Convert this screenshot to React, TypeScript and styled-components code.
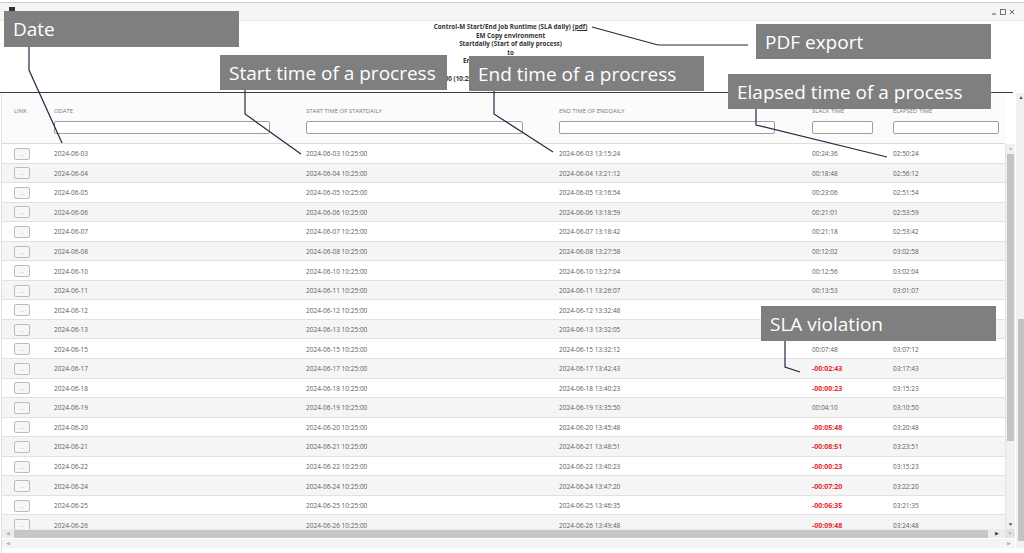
import React from 'react';
import styled, { createGlobalStyle } from 'styled-components';

interface SlaRow {
  odate: string;
  end: string;
  slack: string;
  elapsed: string;
}

const rows: SlaRow[] = [
  { odate: '2024-06-03', end: '13:15:24', slack: '00:24:36', elapsed: '02:50:24' },
  { odate: '2024-06-04', end: '13:21:12', slack: '00:18:48', elapsed: '02:56:12' },
  { odate: '2024-06-05', end: '13:16:54', slack: '00:23:06', elapsed: '02:51:54' },
  { odate: '2024-06-06', end: '13:18:59', slack: '00:21:01', elapsed: '02:53:59' },
  { odate: '2024-06-07', end: '13:18:42', slack: '00:21:18', elapsed: '02:53:42' },
  { odate: '2024-06-08', end: '13:27:58', slack: '00:12:02', elapsed: '03:02:58' },
  { odate: '2024-06-10', end: '13:27:04', slack: '00:12:56', elapsed: '03:02:04' },
  { odate: '2024-06-11', end: '13:26:07', slack: '00:13:53', elapsed: '03:01:07' },
  { odate: '2024-06-12', end: '13:32:48', slack: '00:07:12', elapsed: '03:07:48' },
  { odate: '2024-06-13', end: '13:32:05', slack: '00:07:55', elapsed: '03:07:05' },
  { odate: '2024-06-15', end: '13:32:12', slack: '00:07:48', elapsed: '03:07:12' },
  { odate: '2024-06-17', end: '13:42:43', slack: '-00:02:43', elapsed: '03:17:43' },
  { odate: '2024-06-18', end: '13:40:23', slack: '-00:00:23', elapsed: '03:15:23' },
  { odate: '2024-06-19', end: '13:35:50', slack: '00:04:10', elapsed: '03:10:50' },
  { odate: '2024-06-20', end: '13:45:48', slack: '-00:05:48', elapsed: '03:20:48' },
  { odate: '2024-06-21', end: '13:48:51', slack: '-00:08:51', elapsed: '03:23:51' },
  { odate: '2024-06-22', end: '13:40:23', slack: '-00:00:23', elapsed: '03:15:23' },
  { odate: '2024-06-24', end: '13:47:20', slack: '-00:07:20', elapsed: '03:22:20' },
  { odate: '2024-06-25', end: '13:46:35', slack: '-00:06:35', elapsed: '03:21:35' },
  { odate: '2024-06-26', end: '13:49:48', slack: '-00:09:48', elapsed: '03:24:48' },
];

const GRID_COLUMNS = '40px 252px 253px 253px 81px 1fr';

const GlobalStyle = createGlobalStyle`
  html, body {
    margin: 0;
    padding: 0;
    background: #fff;
  }
  body {
    font-family: 'Open Sans', 'Noto Sans', 'Liberation Sans', sans-serif;
  }
  * {
    box-sizing: border-box;
  }
`;

const Window = styled.div`
  position: relative;
  width: 1024px;
  height: 553px;
  overflow: hidden;
  background: #fff;
  display: flex;
  flex-direction: column;
  padding-top: 2px;
`;

const TitleBar = styled.div`
  height: 19px;
  flex: none;
  border-top: 1px solid #cfcfcf;
  border-bottom: 1px solid #e6e6e6;
  background: #f5f5f5;
  display: flex;
  align-items: center;
  justify-content: space-between;
  padding: 0 9px 0 9px;
`;

const AppIcon = styled.span`
  width: 6px;
  height: 4px;
  margin-top: -6px;
  background: #333;
`;

const WindowControls = styled.div`
  display: flex;
  align-items: center;
  gap: 3px;
  color: #555;
`;

const ReportHeader = styled.div`
  height: 72px;
  flex: none;
  margin-right: 11px;
  padding-top: 2px;
  border-bottom: 1px solid #3c3c3c;
  display: flex;
  flex-direction: column;
  align-items: center;
  padding-left: 8px;
`;

const HeaderLine = styled.div`
  font-size: 6.3px;
  font-weight: 700;
  line-height: 8.6px;
  color: #333;
  white-space: nowrap;
`;

const PdfLink = styled.a`
  color: #333;
  text-decoration: underline;
`;

const Body = styled.div`
  flex: 1;
  display: flex;
  min-height: 0;
`;

const GridArea = styled.div`
  flex: 1;
  display: flex;
  flex-direction: column;
  border-left: 1px solid #e0e0e0;
  margin-left: 1px;
`;

const HeaderGrid = styled.div`
  height: 51px;
  flex: none;
  display: grid;
  grid-template-columns: ${GRID_COLUMNS};
  padding-left: 6px;
  background: #fbfbfb;
  border-bottom: 1px solid #dcdcdc;
  margin-right: 10px;
`;

const HeaderCell = styled.div`
  padding: 14px 6px 0;
  display: flex;
  flex-direction: column;
  gap: 6px;
`;

const ColumnLabel = styled.span`
  font-size: 5.9px;
  line-height: 8px;
  height: 8px;
  color: #7a7a7a;
  text-transform: uppercase;
  white-space: nowrap;
`;

const FilterInput = styled.input<{ $width: number }>`
  width: ${(p) => p.$width}px;
  height: 13px;
  padding: 0 3px;
  border: 1px solid #9e9e9e;
  border-radius: 2px;
  background: #fff;
  font-size: 6px;
`;

const Viewport = styled.div`
  height: 385px;
  flex: none;
  display: flex;
`;

const RowsArea = styled.div`
  flex: 1;
  overflow: hidden;
`;

const Row = styled.div<{ $alt: boolean }>`
  height: 19.55px;
  display: grid;
  grid-template-columns: ${GRID_COLUMNS};
  align-items: center;
  padding-left: 6px;
  padding-top: 1px;
  background: ${(p) => (p.$alt ? '#f5f5f5' : '#fff')};
  border-bottom: 1px solid #e1e1e1;
`;

const Cell = styled.div<{ $negative?: boolean }>`
  padding-left: 6px;
  font-size: ${(p) => (p.$negative ? '7px' : '6.5px')};
  font-weight: ${(p) => (p.$negative ? 700 : 400)};
  color: ${(p) => (p.$negative ? '#e3262e' : '#5c5c5c')};
  white-space: nowrap;
`;

const DotsButton = styled.button`
  width: 16px;
  height: 12px;
  margin-left: 6px;
  padding: 0 0 2px;
  border: 1px solid #bcbcbc;
  border-radius: 2px;
  background: #f7f7f7;
  color: #9a9a9a;
  font-family: inherit;
  font-size: 5px;
  line-height: 1;
  display: flex;
  align-items: flex-end;
  justify-content: center;
`;

const VTrack = styled.div`
  width: 10px;
  flex: none;
  display: flex;
  flex-direction: column;
  align-items: center;
  background: #f0f0f0;
  border-left: 1px solid #e4e4e4;
`;

const VThumb = styled.div<{ $top: number; $height: number }>`
  width: 7px;
  margin-top: ${(p) => p.$top}px;
  height: ${(p) => p.$height}px;
  background: #c3c3c3;
`;

const Arrow = styled.span<{ $faint?: boolean }>`
  font-size: 5px;
  line-height: 1;
  color: ${(p) => (p.$faint ? '#b5b5b5' : '#444')};
  flex: none;
`;

const VArrowSlot = styled.div<{ $push?: boolean }>`
  height: 9px;
  display: flex;
  align-items: center;
  justify-content: center;
  margin-top: ${(p) => (p.$push ? 'auto' : '0')};
`;

const HTrack = styled.div<{ $light?: boolean }>`
  height: 9px;
  flex: none;
  display: flex;
  align-items: center;
  background: ${(p) => (p.$light ? '#f4f4f4' : '#ececec')};
  margin-bottom: 1px;
`;

const HArrowSlot = styled.div<{ $width: number }>`
  width: ${(p) => p.$width}px;
  height: 100%;
  flex: none;
  display: flex;
  align-items: center;
  justify-content: center;
`;

const HThumb = styled.div`
  flex: 1;
  height: 8px;
  background: #c6c6c6;
`;

const HSpacer = styled.div`
  flex: 1;
`;

const Corner = styled.div`
  width: 10px;
  height: 100%;
  flex: none;
  background: #e2e2e2;
  display: flex;
  align-items: center;
  justify-content: center;
`;

const OuterScroll = styled.div`
  width: 10px;
  flex: none;
  margin: 0 2px 5px 1px;
  display: flex;
  flex-direction: column;
  align-items: center;
  background: #f1f1f1;
`;

/* annotation layer drawn over the screenshot */
const Callout = styled.div<{ $x: number; $y: number; $w: number; $h: number }>`
  position: absolute;
  left: ${(p) => p.$x}px;
  top: ${(p) => p.$y}px;
  width: ${(p) => p.$w}px;
  height: ${(p) => p.$h}px;
  padding-left: 9px;
  display: flex;
  align-items: center;
  background: #7f7f7f;
  color: #fff;
  font-family: 'Open Sans', 'Noto Sans', sans-serif;
  font-size: 19px;
  white-space: nowrap;
  z-index: 2;
`;

const Leaders = styled.svg`
  position: absolute;
  left: 0;
  top: 0;
  width: 1024px;
  height: 553px;
  pointer-events: none;
  z-index: 1;
`;

const callouts = [
  { text: 'Date', x: 4, y: 11, w: 235, h: 36 },
  { text: 'Start time of a procress', x: 220, y: 55, w: 227, h: 35 },
  { text: 'End time of a procress', x: 469, y: 56, w: 235, h: 35 },
  { text: 'PDF export', x: 756, y: 24, w: 235, h: 35 },
  { text: 'Elapsed time of a process', x: 728, y: 74, w: 263, h: 35 },
  { text: 'SLA violation', x: 761, y: 306, w: 235, h: 35 },
];

const leaderLines = [
  '29,47 29,70 62,143',
  '245,90 245,114 301,154',
  '494,91 494,114 553,152',
  '592,27 658,45 748,45',
  '756,109 756,125 887,157',
  '785,341 785,367 800,372',
];

const filters = [
  { label: 'Link', width: 0 },
  { label: 'Odate', width: 216 },
  { label: 'Start time of startdaily', width: 217 },
  { label: 'End time of enddaily', width: 216 },
  { label: 'Slack time', width: 61 },
  { label: 'Elapsed time', width: 106 },
];

const App: React.FC = () => {
  return (
    <Window>
      <GlobalStyle />
      <TitleBar>
        <AppIcon />
        <WindowControls>
          <svg width="6" height="6" viewBox="0 0 6 6">
            <line x1="1" y1="5" x2="5" y2="5" stroke="#555" strokeWidth="1" />
          </svg>
          <svg width="6" height="6" viewBox="0 0 6 6">
            <rect x="0.5" y="0.5" width="5" height="5" fill="none" stroke="#555" strokeWidth="0.8" />
          </svg>
          <svg width="6" height="6" viewBox="0 0 6 6">
            <path d="M0.8 0.8 L5.2 5.2 M5.2 0.8 L0.8 5.2" stroke="#555" strokeWidth="0.9" />
          </svg>
        </WindowControls>
      </TitleBar>

      <ReportHeader>
        <HeaderLine>
          Control-M Start/End Job Runtime (SLA daily) <PdfLink>(pdf)</PdfLink>
        </HeaderLine>
        <HeaderLine>EM Copy environment</HeaderLine>
        <HeaderLine>Startdaily (Start of daily process)</HeaderLine>
        <HeaderLine>to</HeaderLine>
        <HeaderLine>Enddaily (End of daily process)</HeaderLine>
        <HeaderLine>SLA 13:40</HeaderLine>
        <HeaderLine>
          SLA: 13:40:00 (10:25:00 start + 03:15:00 max. runtime, Mon - Sat)
        </HeaderLine>
      </ReportHeader>

      <Body>
        <GridArea>
          <HeaderGrid>
            {filters.map((f) => (
              <HeaderCell key={f.label}>
                <ColumnLabel>{f.label}</ColumnLabel>
                {f.width > 0 && <FilterInput $width={f.width} />}
              </HeaderCell>
            ))}
          </HeaderGrid>

          <Viewport>
            <RowsArea>
              {rows.map((r, i) => (
                <Row key={r.odate} $alt={i % 2 === 1}>
                  <DotsButton>...</DotsButton>
                  <Cell>{r.odate}</Cell>
                  <Cell>{r.odate} 10:25:00</Cell>
                  <Cell>
                    {r.odate} {r.end}
                  </Cell>
                  <Cell $negative={r.slack.startsWith('-')}>{r.slack}</Cell>
                  <Cell>{r.elapsed}</Cell>
                </Row>
              ))}
            </RowsArea>
            <VTrack>
              <VArrowSlot>
                <Arrow $faint>▲</Arrow>
              </VArrowSlot>
              <VThumb $top={1} $height={287} />
              <VArrowSlot $push>
                <Arrow>▼</Arrow>
              </VArrowSlot>
            </VTrack>
          </Viewport>

          <HTrack>
            <HArrowSlot $width={12}>
              <Arrow $faint>◀</Arrow>
            </HArrowSlot>
            <HThumb />
            <HArrowSlot $width={17}>
              <Arrow>▶</Arrow>
            </HArrowSlot>
            <Corner>
              <Arrow $faint>▼</Arrow>
            </Corner>
          </HTrack>

          <HTrack $light>
            <HArrowSlot $width={12}>
              <Arrow $faint>◀</Arrow>
            </HArrowSlot>
            <HSpacer />
            <HArrowSlot $width={12}>
              <Arrow $faint>▶</Arrow>
            </HArrowSlot>
          </HTrack>
        </GridArea>

        <OuterScroll>
          <VArrowSlot>
            <Arrow>▲</Arrow>
          </VArrowSlot>
          <VThumb $top={217} $height={222} />
        </OuterScroll>
      </Body>

      <Leaders viewBox="0 0 1024 553">
        {leaderLines.map((pts) => (
          <polyline key={pts} points={pts} fill="none" stroke="#1e2b42" strokeWidth="1.2" />
        ))}
      </Leaders>

      {callouts.map((c) => (
        <Callout key={c.text} $x={c.x} $y={c.y} $w={c.w} $h={c.h}>
          {c.text}
        </Callout>
      ))}
    </Window>
  );
};

export default App;
